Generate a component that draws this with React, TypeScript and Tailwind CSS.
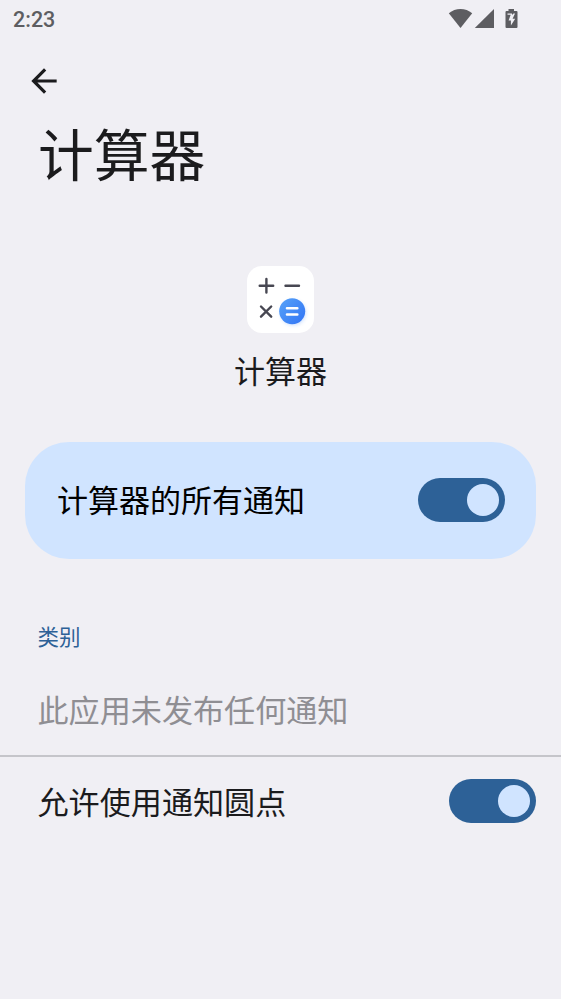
import React from "react";

const Toggle: React.FC<{ label: string }> = ({ label }) => (
  <button
    type="button"
    role="switch"
    aria-checked="true"
    aria-label={label}
    className="flex h-11 w-[87.5px] shrink-0 items-center justify-end rounded-full bg-[#2d6197] pr-[6px]"
  >
    <span className="size-[32px] rounded-full bg-[#d0e4ff]" />
  </button>
);

const StatusBar: React.FC = () => (
  <div className="flex h-[38px] items-center justify-between pl-[13px] pr-[43px] text-[#5d5d61]">
    <span className="pt-0.5 font-[Roboto] text-[21.500px] font-medium leading-[36px]">2:23</span>
    <svg width="70" height="20" viewBox="0 0 70 20" fill="currentColor">
      <path d="M.8 4.3C7.5-1.4 17.5-1.4 24.2 4.3L12.5 19Z" />
      <path d="M46 0v19H26.800Z" />
      <path
        fillRule="evenodd"
        d="M60.500 0h5.500v2h2.500q1 0 1 1v15q0 1-1 1H58.500q-1 0-1-1V3q0-1 1-1h2ZM59.500 4.500v1.300h3.200L60.600 11.500h2.300v5l4.300-6.800h-2.600L67 4.500h-1.500l-1.500 1.500v-1.500Z"
      />
    </svg>
  </div>
);

const CalculatorIcon: React.FC = () => (
  <svg width="67" height="67" viewBox="0 0 67 67" fill="none">
    <defs>
      <linearGradient id="equals" x1="33" y1="36" x2="57" y2="57" gradientUnits="userSpaceOnUse">
        <stop stopColor="#559ff8" />
        <stop offset="1" stopColor="#3276f5" />
      </linearGradient>
      <filter id="shadow" x="25" y="28" width="42" height="39" filterUnits="userSpaceOnUse">
        <feDropShadow dx="1" dy="1.500" stdDeviation="1.500" floodColor="#3b80f6" floodOpacity=".2" />
      </filter>
    </defs>
    <rect width="67" height="67" rx="15" fill="#fff" />
    <path
      d="M12.700 19.700h13.500M19.400 12.900v13.600M38.500 19.700h13.500M14 40.500l10.200 10.200M24.200 40.500 14 50.700"
      stroke="#474752"
      strokeWidth="2.400"
      strokeLinecap="round"
    />
    <circle cx="45.200" cy="45.200" r="13" fill="url(#equals)" filter="url(#shadow)" />
    <path d="M40 42.300h10.300M40 48.500h10.300" stroke="#fff" strokeWidth="2.600" strokeLinecap="round" />
  </svg>
);

export default function App() {
  return (
    <main className="flex h-[999px] w-[561px] flex-col overflow-hidden bg-[#f0eff4] font-['Noto_Sans_CJK_SC',sans-serif] text-[#1b1b1d]">
      <StatusBar />

      <header className="flex flex-col">
        <button type="button" aria-label="返回" className="ml-[24.500px] mt-6 size-[38px]">
          <svg width="38" height="38" viewBox="0 0 24 24" fill="currentColor">
            <path d="M20 11H7.830l5.590-5.590L12 4l-8 8 8 8 1.410-1.410L7.830 13H20v-2z" />
          </svg>
        </button>
        <h1 className="ml-[38px] mt-3 h-20 text-[55.800px] leading-[80px]">计算器</h1>
      </header>

      <section className="mt-[74px] flex flex-col items-center">
        <CalculatorIcon />
        <h2 className="mt-[15px] h-11 text-[31px] leading-[44px]">计算器</h2>
      </section>

      <section className="mx-[25px] mt-[50px] flex h-[117px] items-center justify-between rounded-[44px] bg-[#d0e4ff] pb-px pl-8 pr-[31px]">
        <span className="pb-0.5 text-[31px] leading-[44px] text-black">计算器的所有通知</span>
        <Toggle label="计算器的所有通知" />
      </section>

      <section className="mt-[61px] pl-[37.500px]">
        <h3 className="h-8 text-[21.500px] leading-8 text-[#2d6197]">类别</h3>
        <p className="mt-[35px] h-[68px] text-[31.100px] leading-[44px] text-[#8f8e93]">此应用未发布任何通知</p>
      </section>

      <section className="flex h-[90px] items-center justify-between border-t-2 border-[#c5c5ca] pl-[37.500px] pr-[25px]">
        <span className="text-[31.100px] leading-[44px]">允许使用通知圆点</span>
        <Toggle label="允许使用通知圆点" />
      </section>
    </main>
  );
}
